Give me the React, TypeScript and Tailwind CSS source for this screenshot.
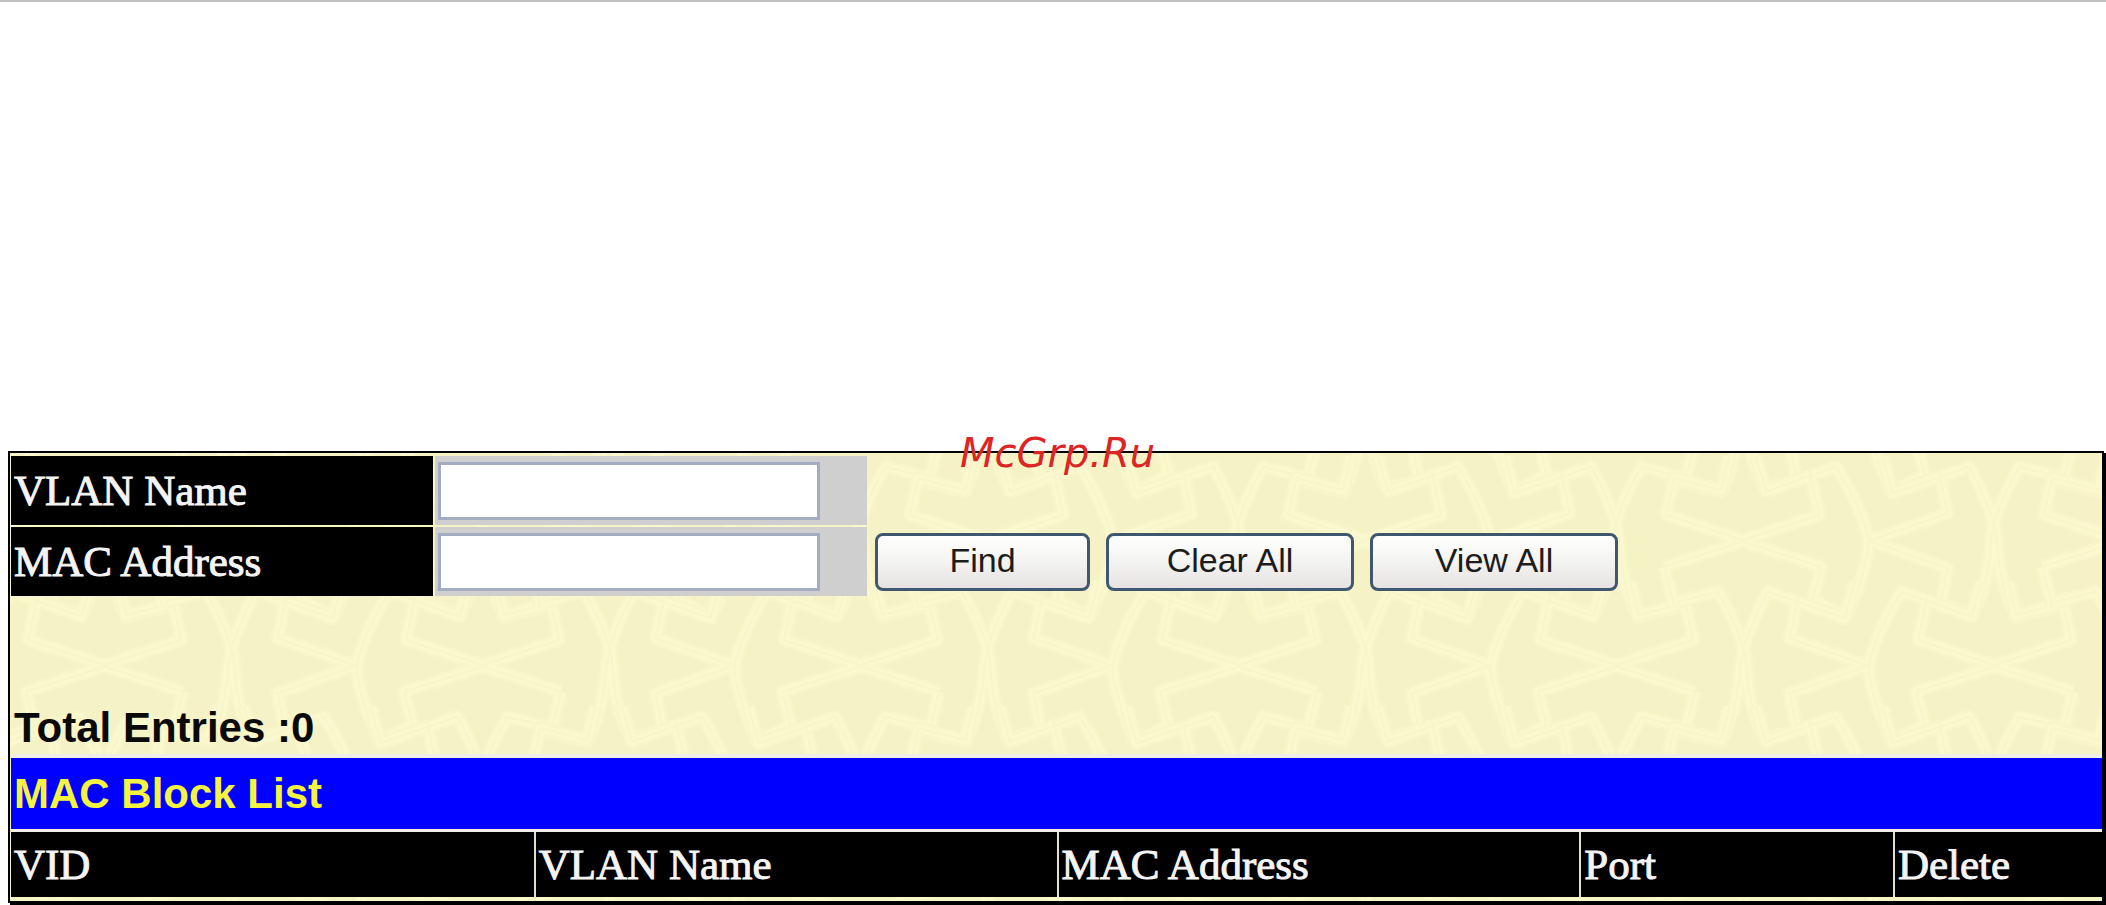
const fields = [
  { id: "vlan-name", label: "VLAN Name" },
  { id: "mac-address", label: "MAC Address" },
];

const actions = [
  { label: "Find", width: "w-[215px]" },
  { label: "Clear All", width: "w-[248px]" },
  { label: "View All", width: "w-[248px]" },
];

const columns = [
  { label: "VID", width: "w-[25%]" },
  { label: "VLAN Name", width: "w-[25%]" },
  { label: "MAC Address", width: "w-[25%]" },
  { label: "Port", width: "w-[15%]" },
  { label: "Delete", width: "w-[10%]" },
];

// One row of the lattice. The row below is its mirror image.
const motif = [
  "M430 20 L405 120 L265 85 L240 195 L470 270 L700 195 L670 60",
  "M235 350 L470 275 L705 350 L680 450 L780 500 Q850 340 848 275 Q835 190 750 50 L540 125 L510 20",
  "M1060 70 L1085 190 L850 272 L1085 355 L1060 480",
  "M890 20 L920 130 L1150 50 Q1225 190 1232 270 Q1240 400 1290 500 L1415 470",
  "M1420 80 L1300 50 Q1220 190 1215 270 Q1210 400 1160 490 L1040 460",
  "M235 350 L265 470",
].join(" ");

const offsets = [-1, 0, 1].flatMap((col) =>
  [-1, 0, 1].map((row) => ({ x: col * 1134, y: row * 750 }))
);

function Backdrop() {
  return (
    <svg aria-hidden className="absolute inset-0 -z-10 h-full w-full">
      <defs>
        <g id="motif" fill="none" strokeLinejoin="round">
          <path d={motif} stroke="#f8f5c8" strokeWidth="42" />
          <path d={motif} stroke="#faf8cd" strokeWidth="28" />
          <path d={motif} stroke="#f8f5cb" strokeWidth="6" />
        </g>
        <pattern
          id="lattice"
          width="1134"
          height="750"
          patternUnits="userSpaceOnUse"
          patternTransform="translate(1576 -3) scale(0.3333)"
        >
          <rect width="1134" height="750" fill="#f5f2c5" />
          {offsets.map(({ x, y }) => (
            <g key={`${x},${y}`} transform={`translate(${x} ${y})`}>
              <use href="#motif" />
              <use href="#motif" transform="translate(1696 375) scale(-1 1)" />
            </g>
          ))}
        </pattern>
      </defs>
      <rect width="100%" height="100%" fill="url(#lattice)" />
    </svg>
  );
}

function SearchForm() {
  return (
    <form
      className="flex flex-wrap items-end gap-2"
      onSubmit={(e) => e.preventDefault()}
    >
      <div className="flex flex-col gap-[2px]">
        {fields.map((field) => (
          <div key={field.id} className="flex h-[69px] gap-[2px]">
            <label
              htmlFor={field.id}
              className="flex w-[422px] items-center bg-black pl-[3px] font-['Liberation_Serif',serif] text-[43px] leading-[48px] text-[#f4f4f4] [-webkit-text-stroke:1px_#f4f4f4]"
            >
              {field.label}
            </label>
            <div className="flex w-[432px] items-center bg-[#cfcfd0] pl-[3px]">
              <input
                id={field.id}
                type="text"
                className="h-[58px] w-[382px] border-[3px] border-[#a3adbf] bg-white px-2 font-['Liberation_Sans',sans-serif] text-[34px] outline-none"
              />
            </div>
          </div>
        ))}
      </div>
      <div className="flex h-[69px] items-center gap-4">
        {actions.map((action) => (
          <button
            key={action.label}
            type="button"
            className={`${action.width} h-[58px] rounded-lg border-[3px] border-[#40586f] bg-linear-to-b from-white via-[#f3f3f1] to-[#e6e3e2] pb-1 font-['Liberation_Sans',sans-serif] text-[34px] leading-10 text-[#1c1c1c]`}
          >
            {action.label}
          </button>
        ))}
      </div>
    </form>
  );
}

function BlockList() {
  return (
    <table className="w-full table-fixed border-separate border-spacing-0 border-t-4 border-[#f0eee6] text-left">
      <colgroup>
        {columns.map((column) => (
          <col key={column.label} className={column.width} />
        ))}
      </colgroup>
      <thead>
        <tr>
          <th
            colSpan={5}
            className="h-[74px] border-b-[3px] border-[#f0eee6] bg-[#0000fe] p-0 pl-[3px] font-['Liberation_Sans',sans-serif] text-[42px] leading-[48px] font-bold text-[#f4f440]"
          >
            MAC Block List
          </th>
        </tr>
        <tr>
          {columns.map((column) => (
            <th
              key={column.label}
              className="h-[65px] border-l-2 border-[#e4e2c4] bg-black p-0 pl-[3px] font-['Liberation_Serif',serif] text-[43px] leading-[48px] font-normal text-[#f4f4f4] [-webkit-text-stroke:1px_#f4f4f4] first:border-l-0"
            >
              {column.label}
            </th>
          ))}
        </tr>
      </thead>
    </table>
  );
}

export default function App() {
  return (
    <div className="border-t-2 border-[#c0c0c0] bg-white pb-[2px]">
      <main className="relative isolate mt-[449px] mr-[2px] ml-2 border-2 border-black pt-[3px] pb-1 pl-px shadow-[2px_2px_0_0_#000]">
        <Backdrop />
        <SearchForm />
        <p className="mt-[108px] mb-[2px] pl-[3px] font-['Liberation_Sans',sans-serif] text-[42px] leading-[48px] font-bold text-[#0a0a0a]">
          Total Entries :0
        </p>
        <BlockList />
        <span className="absolute top-0 left-[950px] -translate-y-1/2 font-['DejaVu_Sans',sans-serif] text-[40px] leading-10 text-[#dc2626] italic">
          McGrp.Ru
        </span>
      </main>
    </div>
  );
}
